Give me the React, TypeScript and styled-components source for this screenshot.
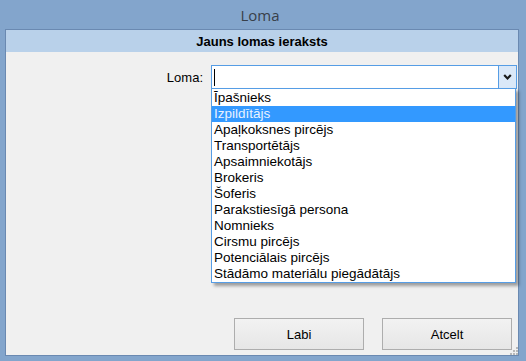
import React from "react";
import styled, { createGlobalStyle } from "styled-components";

const roles = [
  "Īpašnieks",
  "Izpildītājs",
  "Apaļkoksnes pircējs",
  "Transportētājs",
  "Apsaimniekotājs",
  "Brokeris",
  "Šoferis",
  "Parakstiesīgā persona",
  "Nomnieks",
  "Cirsmu pircējs",
  "Potenciālais pircējs",
  "Stādāmo materiālu piegādātājs",
];

const App = () => {
  return (
    <>
      <GlobalStyle />
      <Window>
        <TitleBar>Loma</TitleBar>
        <Client>
          <Header>Jauns lomas ieraksts</Header>
          <Body>
            <FieldRow>
              <Label>Loma:</Label>
              <Combo>
                <ComboText>
                  <Caret />
                </ComboText>
                <ComboButton>
                  <svg width="9" height="6" viewBox="0 0 9 6">
                    <path d="M1.2 1 L4.5 4.4 L7.8 1" stroke="#1a1a1a" strokeWidth="2.2" fill="none" />
                  </svg>
                </ComboButton>
              </Combo>
            </FieldRow>
            <DropList>
              {roles.map((r, i) => (
                <Item key={r} selected={i === 1}>
                  {r}
                </Item>
              ))}
            </DropList>
            <ButtonRow>
              <Button>Labi</Button>
              <Button>Atcelt</Button>
            </ButtonRow>
            <Grip>
              <svg width="9" height="9" viewBox="0 0 9 9">
                {[
                  [7, 1],
                  [4, 4],
                  [7, 4],
                  [1, 7],
                  [4, 7],
                  [7, 7],
                ].map(([x, y]) => (
                  <rect key={`${x}-${y}`} x={x} y={y} width="2" height="2" fill="#b8b8b8" />
                ))}
              </svg>
            </Grip>
          </Body>
        </Client>
      </Window>
    </>
  );
};

const GlobalStyle = createGlobalStyle`
  body {
    margin: 0;
    font-family: "Liberation Sans", Arial, sans-serif;
  }
`;
const Window = styled.div`
  width: 526px;
  height: 361px;
  box-sizing: border-box;
  background: #83a5cc;
  padding: 0 7px 5px 5px;
  display: flex;
  flex-direction: column;
`;
const TitleBar = styled.div`
  height: 29px;
  display: flex;
  align-items: center;
  justify-content: center;
  padding-right: 4px;
  font-family: "Open Sans", "Noto Sans", sans-serif;
  font-size: 15px;
  color: #38404a;
`;
const Client = styled.div`
  flex: 1;
  border: 1px solid #6a89b1;
  background: #f0f0f0;
  display: flex;
  flex-direction: column;
`;
const Header = styled.div`
  height: 22px;
  background: #b9d1ea;
  display: flex;
  align-items: center;
  justify-content: center;
  font-size: 13px;
  font-weight: bold;
  color: #000;
`;
const Body = styled.div`
  flex: 1;
  position: relative;
  display: flex;
  flex-direction: column;
  padding: 13px 0 5px 0;
`;
const FieldRow = styled.div`
  display: flex;
  align-items: center;
  justify-content: flex-end;
  padding-right: 1px;
`;
const Label = styled.div`
  font-size: 13px;
  color: #000;
  margin-right: 8px;
`;
const Combo = styled.div`
  width: 306px;
  height: 24px;
  box-sizing: border-box;
  border: 1px solid #569de5;
  background: #fff;
  display: flex;
`;
const ComboText = styled.div`
  flex: 1;
  display: flex;
  align-items: center;
  padding-left: 2px;
`;
const Caret = styled.div`
  width: 1px;
  height: 17px;
  background: #000;
`;
const ComboButton = styled.div`
  width: 17px;
  border-left: 1px solid #569de5;
  background: #dae8f8;
  display: flex;
  align-items: center;
  justify-content: center;
`;
const DropList = styled.div`
  position: absolute;
  left: 205px;
  top: 36px;
  width: 305px;
  box-sizing: border-box;
  border: 1px solid #569de5;
  background: #fff;
  padding: 1px 0 0 0;
  box-shadow: 3px 3px 3px rgba(0, 0, 0, 0.35);
`;
const Item = styled.div<{ selected?: boolean }>`
  height: 16px;
  line-height: 16px;
  padding-left: 2px;
  font-size: 13.5px;
  white-space: nowrap;
  background: ${(p) => (p.selected ? "#3399ff" : "transparent")};
  color: ${(p) => (p.selected ? "#e8f2ff" : "#000")};
`;
const ButtonRow = styled.div`
  margin-top: auto;
  display: flex;
  justify-content: flex-end;
  gap: 18px;
  padding-right: 6px;
`;
const Button = styled.div`
  width: 130px;
  height: 32px;
  box-sizing: border-box;
  border: 1px solid #adadad;
  background: linear-gradient(#f2f2f2, #e6e6e6);
  display: flex;
  align-items: center;
  justify-content: center;
  font-size: 13px;
  color: #000;
`;
const Grip = styled.div`
  position: absolute;
  right: 0;
  bottom: 0;
  width: 9px;
  height: 9px;
  display: flex;
`;

export default App;
